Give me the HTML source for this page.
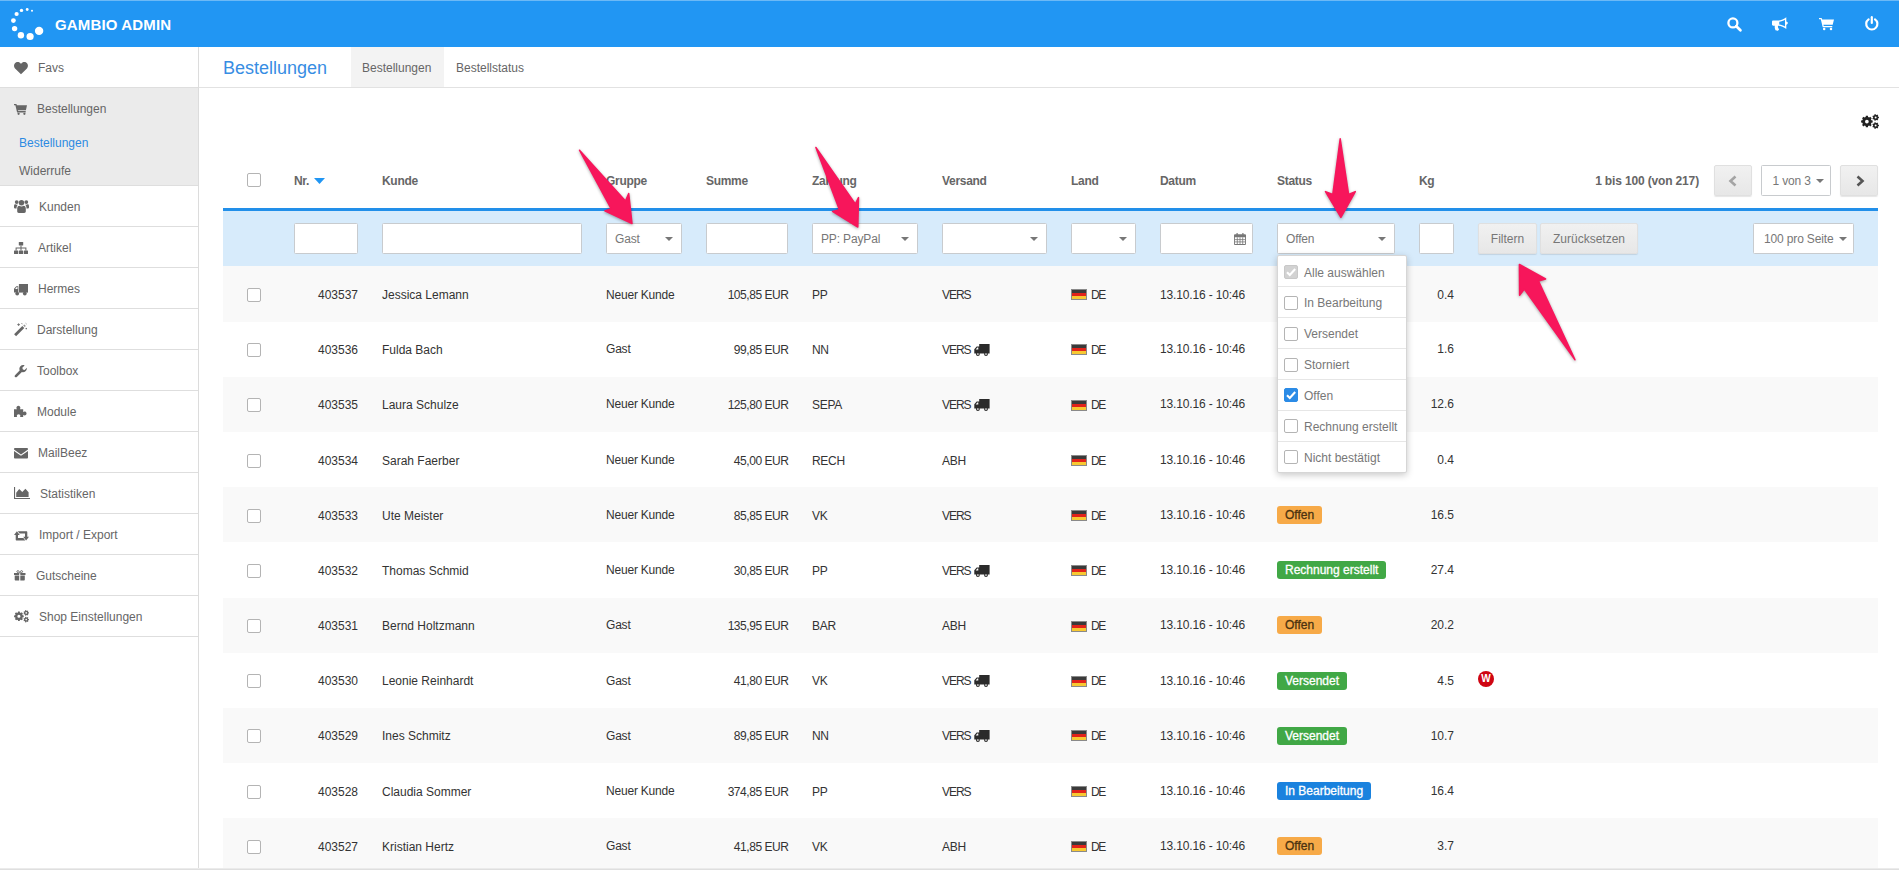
<!DOCTYPE html>
<html lang="de"><head><meta charset="utf-8"><title>Gambio Admin</title>
<style>
*{box-sizing:border-box;margin:0;padding:0}
html,body{width:1899px;height:870px;overflow:hidden;background:#fff}
body{font-family:"Liberation Sans",sans-serif;font-size:12px;color:#333;position:relative}
.abs{position:absolute}
.t{position:absolute;white-space:nowrap;line-height:16px;height:16px}
#hdr{position:absolute;left:0;top:0;width:1899px;height:47px;background:#2196f3;border-top:1px solid #6cb9f6}
#side{position:absolute;left:0;top:47px;width:199px;height:822px;background:#fff;border-right:1px solid #dcdcdc}
.mi{position:absolute;left:0;width:198px;height:41px;border-bottom:1px solid #dedede;color:#666}
.mi span{position:absolute;top:13px;line-height:16px;white-space:nowrap}
#grp{position:absolute;left:0;top:41px;width:198px;height:98px;background:#ebebeb;border-bottom:1px solid #dedede}
.hd{font-weight:bold;color:#666}
.inp{position:absolute;top:223px;height:31px;background:#fff;border:1px solid #c8cbce;border-radius:1.5px}
.sel{position:absolute;top:223px;height:31px;background:#fff;border:1px solid #c8cbce;border-radius:1.5px;color:#777}
.sel span{position:absolute;left:8px;top:7px;line-height:16px;white-space:nowrap;letter-spacing:-.15px}
.sel i{position:absolute;right:8px;top:13px;width:0;height:0;border-left:4px solid transparent;border-right:4px solid transparent;border-top:4px solid #777}
.btn{position:absolute;top:223px;height:31px;background:linear-gradient(#f1f1f1,#e7e7e7);border:1px solid #e0e0e0;border-radius:2px;color:#777;text-align:center;line-height:30px;box-shadow:0 1px 1px rgba(0,0,0,.10)}
.odd{background:#f9f9f9}
.cb{position:absolute;width:14px;height:14px;border:1px solid #b4b4b4;border-radius:2px;background:#fff}
.r{text-align:right}
.badge{position:absolute;height:18px;border-radius:3px;color:#fff;line-height:18px;padding:0 8px;white-space:nowrap}
.flag{position:absolute;width:16px;height:11px}
</style></head>
<body>
<div id="hdr"><svg class="abs" style="left:0;top:-1px" width="50" height="46" viewBox="0 0 50 46"><circle cx="32.0" cy="10.8" r="1.0" fill="#fff"/><circle cx="27.2" cy="9.5" r="1.4" fill="#fff"/><circle cx="21.5" cy="10.4" r="1.7" fill="#fff"/><circle cx="16.6" cy="14.0" r="2.1" fill="#fff"/><circle cx="13.4" cy="20.6" r="2.4" fill="#fff"/><circle cx="14.6" cy="28.6" r="2.7" fill="#fff"/><circle cx="20.9" cy="35.2" r="3.2" fill="#fff"/><circle cx="30.1" cy="36.5" r="3.6" fill="#fff"/><circle cx="39.1" cy="30.9" r="4.2" fill="#fff"/></svg><div class="t" style="left:55px;top:14.5px;font-size:15px;font-weight:bold;color:#fff;line-height:18px;height:18px;letter-spacing:.15px">GAMBIO ADMIN</div><svg class="abs" style="left:1727px;top:16px;overflow:visible" width="14.5" height="14" viewBox="0 0 14.5 14" fill="#fff" ><circle cx="5.9" cy="5.9" r="4.5" fill="none" stroke="#fff" stroke-width="2.3"/><path d="M9.3 9.3L13.4 13.2" stroke="#fff" stroke-width="2.8" stroke-linecap="round"/></svg><svg class="abs" style="left:1772px;top:16px;overflow:visible" width="16" height="14" viewBox="0 0 16 14" fill="#fff" ><g transform="scale(1.1 1.05)"><path d="M0 4.4C0 3.7.5 3.3 1.1 3.3H5.2C8.2 3.2 10.8 2 13 .2V4.3C13.8 4.4 14.4 5 14.4 5.8C14.4 6.6 13.8 7.2 13 7.3V11.4C10.8 9.6 8.4 8.5 5.6 8.3C5.1 9.2 5.4 10.5 6.3 11.4C6.4 12.4 5.6 13 4.6 13C3.7 13 3.2 12.7 2.9 11.9C2.5 10.8 2.3 9.5 2.6 8.3H1.1C.5 8.3 0 7.8 0 7.2ZM11.8 2.6C10.2 3.7 8.5 4.3 6.6 4.5V7.1C8.5 7.3 10.2 7.9 11.8 9Z" fill-rule="evenodd"/></g></svg><svg class="abs" style="left:1819px;top:17px;overflow:visible" width="15" height="12.2" viewBox="0 0 15 12.2" fill="#fff" ><path d="M0 .1H2.6L3.2 1.6H15L13.7 6.8H4.4L4.7 8.1H13.3V9.3H3.7L1.8 1.3H0Z"/><circle cx="5.2" cy="10.9" r="1.25"/><circle cx="12" cy="10.9" r="1.25"/></svg><svg class="abs" style="left:1865.4px;top:15px;overflow:visible" width="13.6" height="14" viewBox="0 0 13.6 14" fill="#fff" ><path d="M3.6 3.3A5.6 5.6 0 1 0 10 3.3" fill="none" stroke="#fff" stroke-width="2.2" stroke-linecap="round"/><path d="M6.8 1.2V7" stroke="#fff" stroke-width="2.2" stroke-linecap="round"/></svg></div>
<div id="side"><div class="mi" style="top:0"><span style="left:38px">Favs</span><svg class="abs" style="left:14px;top:15px;overflow:visible" width="14" height="12.2" viewBox="0 0 14 12.2" fill="#666" ><path d="M7 12.2L1.3 6.7C-.6 4.8-.3 1.7 1.9.5C3.7-.4 5.9.2 7 2C8.1.2 10.3-.4 12.1.5C14.3 1.7 14.6 4.8 12.7 6.7Z"/></svg></div><div id="grp"><svg class="abs" style="left:14px;top:16px;overflow:visible" width="13" height="11" viewBox="0 0 13 11" fill="#666" ><path d="M0 0H2.4L2.9 1.3H13L11.9 6.2H4L4.2 7.1H11.7V8.5H3.1L1.4 1.2H0Z"/><circle cx="4.6" cy="9.8" r="1.15"/><circle cx="10.4" cy="9.8" r="1.15"/></svg><span class="t" style="left:37px;top:13px;color:#666">Bestellungen</span><span class="t" style="left:19px;top:47px;color:#2b8ae2">Bestellungen</span><span class="t" style="left:19px;top:75px;color:#666">Widerrufe</span></div><div class="mi" style="top:139px"><span style="left:39px">Kunden</span><svg class="abs" style="left:14px;top:13.3px;overflow:visible" width="15" height="14" viewBox="0 0 15 14" fill="#666" color="#666"><circle cx="7.5" cy="3.7" r="2.7"/><path d="M3.2 12.3V9.6C3.2 7.5 4.4 6.8 5.4 6.8C6.6 7.7 8.4 7.7 9.6 6.8C10.6 6.8 11.8 7.5 11.8 9.6V12.3C11.8 13.3 11.2 14 10.2 14H4.8C3.8 14 3.2 13.3 3.2 12.3Z"/><circle cx="2.7" cy="3.1" r="1.9"/><circle cx="12.3" cy="3.1" r="1.9"/><path d="M0 8.6V7C0 5.7.7 5.3 1.4 5.3C2.2 5.9 3.2 5.9 4 5.4C3 6.4 2.5 7.6 2.5 9.4H.8C.3 9.4 0 9.1 0 8.6Z"/><path d="M15 8.6V7C15 5.7 14.3 5.3 13.6 5.3C12.8 5.9 11.8 5.9 11 5.4C12 6.4 12.5 7.6 12.5 9.4H14.2C14.7 9.4 15 9.1 15 8.6Z"/></svg></div><div class="mi" style="top:180px"><span style="left:38px">Artikel</span><svg class="abs" style="left:14px;top:14.7px;overflow:visible" width="14" height="12" viewBox="0 0 14 12" fill="#666" color="#666"><rect x="4.8" y="0" width="4.4" height="3.6" rx=".5"/><rect x="0" y="8.4" width="4.2" height="3.6" rx=".5"/><rect x="4.9" y="8.4" width="4.2" height="3.6" rx=".5"/><rect x="9.8" y="8.4" width="4.2" height="3.6" rx=".5"/><path d="M6.5 3.6H7.5V8.4H6.5ZM1.6 5.5H12.4V6.5H1.6ZM1.6 5.5H2.6V8.4H1.6ZM11.4 5.5H12.4V8.4H11.4Z"/></svg></div><div class="mi" style="top:221px"><span style="left:38px">Hermes</span><svg class="abs" style="left:14.3px;top:15.8px;overflow:visible" width="14" height="11.5" viewBox="0 0 14 11.5" fill="#666" color="#666"><path d="M4.9 0H14V8.6H4.9Z"/><path d="M4.3 2.2H2.3L0 4.7V8.6H4.3ZM3.5 3.1V5.1H1.1L2.8 3.1Z" fill-rule="evenodd"/><circle cx="3.2" cy="9.6" r="1.9"/><circle cx="10.8" cy="9.6" r="1.9"/></svg></div><div class="mi" style="top:262px"><span style="left:37px">Darstellung</span><svg class="abs" style="left:14px;top:14px;overflow:visible" width="13" height="13" viewBox="0 0 13 13" fill="#666" color="#666"><path d="M.1 11.2L8.3 3L10.3 5L2.1 13.2Z"/><path d="M9.2 2.6L10.4 1.4L11.9 2.9L10.7 4.1Z" opacity=".7"/><path d="M3.2 1.6H6M4.6.3V3M7.6.2L8.4 1.2M11.6 5.6H13M12.3 4.9V6.3M11.7.3L12.5 1" stroke="currentColor" stroke-width=".8" fill="none"/></svg></div><div class="mi" style="top:303px"><span style="left:37px">Toolbox</span><svg class="abs" style="left:14px;top:15px;overflow:visible" width="13" height="12.6" viewBox="0 0 13 12.6" fill="#666" color="#666"><path d="M1 10.2L6.6 4.6L8.4 6.4L2.8 12C2.3 12.5 1.5 12.5 1 12C.5 11.5.5 10.7 1 10.2Z"/><path d="M12.9 2.7L10.6 5L8.9 4.4L8.3 2.7L10.6.4C9.2-.2 7.5.1 6.4 1.2C5 2.6 5 4.9 6.4 6.3C7.8 7.7 10.1 7.7 11.5 6.3C12.5 5.3 12.9 3.9 12.9 2.7Z"/></svg></div><div class="mi" style="top:344px"><span style="left:37px">Module</span><svg class="abs" style="left:13.7px;top:13.8px;overflow:visible" width="13" height="12" viewBox="0 0 13 12" fill="#666" color="#666"><path d="M0 4.2H2.9C2.3 3.4 2.2 2.3 2.9 1.5C3.7.6 5.1.6 5.9 1.5C6.6 2.3 6.5 3.4 5.9 4.2H9.2V7C10 6.4 11.1 6.3 11.9 7C12.8 7.8 12.8 9.2 11.9 10C11.1 10.7 10 10.6 9.2 10V12H6C6.5 11.3 6.5 10.4 5.9 9.8C5.2 9.1 4 9.1 3.3 9.8C2.7 10.4 2.7 11.3 3.2 12H0Z"/></svg></div><div class="mi" style="top:385px"><span style="left:38px">MailBeez</span><svg class="abs" style="left:14px;top:16px;overflow:visible" width="14" height="10.5" viewBox="0 0 14 10.5" fill="#666" color="#666"><path d="M0 1.1C0 .5.5 0 1.1 0H12.9C13.5 0 14 .5 14 1.1V1.6L7 6.4L0 1.6ZM0 2.9L7 7.7L14 2.9V9.4C14 10 13.5 10.5 12.9 10.5H1.1C.5 10.5 0 10 0 9.4Z"/></svg></div><div class="mi" style="top:426px"><span style="left:40px">Statistiken</span><svg class="abs" style="left:14px;top:14.1px;overflow:visible" width="16" height="12" viewBox="0 0 16 12" fill="#666" color="#666"><path d="M0 0H1.1V10.9H16V12H0Z"/><path d="M2.2 9.9V5.8L5.2 2L8.3 5L11.4 1.8L14.6 5.2V9.9Z"/></svg></div><div class="mi" style="top:467px"><span style="left:39px">Import / Export</span><svg class="abs" style="left:14px;top:16.7px;overflow:visible" width="15" height="9.5" viewBox="0 0 15 9.5" fill="#666" color="#666"><path d="M0 3.9L2.9.2L5.8 3.9H4V7.1H9.4L11.3 9.4H2.7C2.1 9.4 1.7 9 1.7 8.4V3.9Z"/><path d="M15 5.7L12.1 9.4L9.2 5.7H11V2.5H5.6L3.7.2H12.3C12.9.2 13.3.6 13.3 1.2V5.7Z"/></svg></div><div class="mi" style="top:508px"><span style="left:36px">Gutscheine</span><svg class="abs" style="left:14.3px;top:15.3px;overflow:visible" width="11.5" height="10.5" viewBox="0 0 11.5 10.5" fill="#666" color="#666"><path d="M0 3H5.2V4.9H0ZM6.3 3H11.5V4.9H6.3ZM.7 5.4H5.2V10.5H1.4C1 10.5.7 10.2.7 9.8ZM6.3 5.4H10.8V9.8C10.8 10.2 10.5 10.5 10.1 10.5H6.3Z"/><path d="M5.6 2.9C4.2 2.9 2.9 2.6 2.9 1.6C2.9.3 4.8.2 5.7 2.4C6.6.2 8.6.3 8.6 1.6C8.6 2.6 7.2 2.9 5.9 2.9" fill="none" stroke="currentColor" stroke-width="1"/></svg></div><div class="mi" style="top:549px"><span style="left:39px">Shop Einstellungen</span><svg class="abs" style="left:14px;top:14px;overflow:visible" width="15" height="12.5" viewBox="0 0 15 12.5" fill="#666" color="#666"><path fill-rule="evenodd" d="M8.67 5.30 L9.72 5.42 L9.72 7.18 L8.67 7.30 L8.27 8.26 L8.93 9.09 L7.69 10.33 L6.86 9.67 L5.90 10.07 L5.78 11.12 L4.02 11.12 L3.90 10.07 L2.94 9.67 L2.11 10.33 L0.87 9.09 L1.53 8.26 L1.13 7.30 L0.08 7.18 L0.08 5.42 L1.13 5.30 L1.53 4.34 L0.87 3.51 L2.11 2.27 L2.94 2.93 L3.90 2.53 L4.02 1.48 L5.78 1.48 L5.90 2.53 L6.86 2.93 L7.69 2.27 L8.93 3.51 L8.27 4.34Z M6.45 6.30 A1.55 1.55 0 1 0 3.35 6.30 A1.55 1.55 0 1 0 6.45 6.30Z"/><path fill-rule="evenodd" d="M14.26 2.27 L14.94 2.33 L14.94 3.47 L14.26 3.53 L13.97 4.12 L14.36 4.68 L13.46 5.40 L12.99 4.90 L12.35 5.04 L12.15 5.70 L11.03 5.44 L11.13 4.77 L10.62 4.36 L9.98 4.61 L9.48 3.57 L10.07 3.23 L10.07 2.57 L9.48 2.23 L9.98 1.19 L10.62 1.44 L11.13 1.03 L11.03 0.36 L12.15 0.10 L12.35 0.76 L12.99 0.90 L13.46 0.40 L14.36 1.12 L13.97 1.68Z M13.00 2.90 A0.8 0.8 0 1 0 11.40 2.90 A0.8 0.8 0 1 0 13.00 2.90Z"/><path fill-rule="evenodd" d="M14.26 8.97 L14.94 9.03 L14.94 10.17 L14.26 10.23 L13.97 10.82 L14.36 11.38 L13.46 12.10 L12.99 11.60 L12.35 11.74 L12.15 12.40 L11.03 12.14 L11.13 11.47 L10.62 11.06 L9.98 11.31 L9.48 10.27 L10.07 9.93 L10.07 9.27 L9.48 8.93 L9.98 7.89 L10.62 8.14 L11.13 7.73 L11.03 7.06 L12.15 6.80 L12.35 7.46 L12.99 7.60 L13.46 7.10 L14.36 7.82 L13.97 8.38Z M13.00 9.60 A0.8 0.8 0 1 0 11.40 9.60 A0.8 0.8 0 1 0 13.00 9.60Z"/></svg></div></div>
<div class="abs" style="left:199px;top:47px;width:1700px;height:41px;border-bottom:1px solid #e2e2e2"></div><div class="abs" style="left:351px;top:47px;width:93px;height:40px;background:#f3f3f3"></div><div class="t" style="left:223px;top:56px;font-size:18px;line-height:24px;height:24px;color:#378de3">Bestellungen</div><div class="t" style="left:362px;top:60px;color:#666">Bestellungen</div><div class="t" style="left:456px;top:60px;color:#666">Bestellstatus</div><svg class="abs" style="left:1860.6px;top:113.6px;overflow:visible" width="17.5" height="16" viewBox="0 0 17.5 16" fill="#222" ><path fill-rule="evenodd" d="M10.40 6.36 L11.66 6.50 L11.66 8.62 L10.40 8.76 L9.93 9.91 L10.72 10.90 L9.22 12.40 L8.23 11.61 L7.08 12.08 L6.94 13.34 L4.82 13.34 L4.68 12.08 L3.53 11.61 L2.54 12.40 L1.04 10.90 L1.83 9.91 L1.36 8.76 L0.10 8.62 L0.10 6.50 L1.36 6.36 L1.83 5.21 L1.04 4.22 L2.54 2.72 L3.53 3.51 L4.68 3.04 L4.82 1.78 L6.94 1.78 L7.08 3.04 L8.23 3.51 L9.22 2.72 L10.72 4.22 L9.93 5.21Z M7.74 7.56 A1.8599999999999999 1.8599999999999999 0 1 0 4.02 7.56 A1.8599999999999999 1.8599999999999999 0 1 0 7.74 7.56Z"/><path fill-rule="evenodd" d="M17.11 2.73 L17.93 2.79 L17.93 4.17 L17.11 4.23 L16.77 4.94 L17.23 5.62 L16.15 6.48 L15.59 5.88 L14.83 6.05 L14.58 6.84 L13.24 6.53 L13.36 5.72 L12.74 5.23 L11.98 5.53 L11.38 4.29 L12.09 3.87 L12.09 3.09 L11.38 2.67 L11.98 1.43 L12.74 1.73 L13.36 1.24 L13.24 0.43 L14.58 0.12 L14.83 0.91 L15.59 1.08 L16.15 0.48 L17.23 1.34 L16.77 2.02Z M15.60 3.48 A0.96 0.96 0 1 0 13.68 3.48 A0.96 0.96 0 1 0 15.60 3.48Z"/><path fill-rule="evenodd" d="M17.11 10.77 L17.93 10.83 L17.93 12.21 L17.11 12.27 L16.77 12.98 L17.23 13.66 L16.15 14.52 L15.59 13.92 L14.83 14.09 L14.58 14.88 L13.24 14.57 L13.36 13.76 L12.74 13.27 L11.98 13.57 L11.38 12.33 L12.09 11.91 L12.09 11.13 L11.38 10.71 L11.98 9.47 L12.74 9.77 L13.36 9.28 L13.24 8.47 L14.58 8.16 L14.83 8.95 L15.59 9.12 L16.15 8.52 L17.23 9.38 L16.77 10.06Z M15.60 11.52 A0.96 0.96 0 1 0 13.68 11.52 A0.96 0.96 0 1 0 15.60 11.52Z"/></svg>
<div class="cb" style="left:247px;top:173px"></div>
<div class="t hd" style="left:294px;top:173px;letter-spacing:-.3px">Nr.</div>
<div class="t hd" style="left:382px;top:173px;letter-spacing:-.3px">Kunde</div>
<div class="t hd" style="left:606px;top:173px;letter-spacing:-.3px">Gruppe</div>
<div class="t hd" style="left:706px;top:173px;letter-spacing:-.3px">Summe</div>
<div class="t hd" style="left:812px;top:173px;letter-spacing:-.3px">Zahlung</div>
<div class="t hd" style="left:942px;top:173px;letter-spacing:-.3px">Versand</div>
<div class="t hd" style="left:1071px;top:173px;letter-spacing:-.3px">Land</div>
<div class="t hd" style="left:1160px;top:173px;letter-spacing:-.3px">Datum</div>
<div class="t hd" style="left:1277px;top:173px;letter-spacing:-.3px">Status</div>
<div class="t hd" style="left:1419px;top:173px;letter-spacing:-.3px">Kg</div>
<svg class="abs" style="left:314px;top:178px" width="11" height="6" viewBox="0 0 11 6"><path d="M0 0H11L5.5 6Z" fill="#2196f3"/></svg>
<div class="t hd" style="left:1496px;width:203px;top:173px;text-align:right;letter-spacing:-.15px">1 bis 100 (von 217)</div>
<div class="btn" style="left:1714px;top:165px;width:38px;height:31px"><svg class="abs" style="left:13px;top:9px" width="9" height="12" viewBox="0 0 9 12"><path d="M7.5 1.5L2.5 6L7.5 10.5" fill="none" stroke="#a4a4a4" stroke-width="2.6"/></svg></div>
<div class="sel" style="left:1761px;top:165px;width:70px;height:31px"><span style="left:10.5px">1 von 3</span><i style="right:6px;top:13px"></i></div>
<div class="btn" style="left:1840px;top:165px;width:38px;height:31px"><svg class="abs" style="left:15px;top:9px" width="9" height="12" viewBox="0 0 9 12"><path d="M1.5 1.5L6.5 6L1.5 10.5" fill="none" stroke="#555" stroke-width="2.6"/></svg></div>
<div class="abs" style="left:223px;top:208px;width:1655px;height:3px;background:#228fe9"></div>
<div class="abs" style="left:223px;top:211px;width:1655px;height:55px;background:#d7ebfb"></div>
<div class="inp" style="left:294px;width:64px"></div>
<div class="inp" style="left:382px;width:200px"></div>
<div class="sel" style="left:606px;width:76px"><span>Gast</span><i></i></div>
<div class="inp" style="left:706px;width:82px"></div>
<div class="sel" style="left:812px;width:106px"><span>PP: PayPal</span><i></i></div>
<div class="sel" style="left:942px;width:105px"><i></i></div>
<div class="sel" style="left:1071px;width:65px"><i></i></div>
<div class="inp" style="left:1160px;width:93px"><svg class="abs" style="left:73px;top:9px;overflow:visible" width="12" height="12" viewBox="0 0 12 12" fill="#777" color="#777"><path fill-rule="evenodd" d="M0 2.2C0 1.7.4 1.3.9 1.3H11.1C11.6 1.3 12 1.7 12 2.2V11.1C12 11.6 11.6 12 11.1 12H.9C.4 12 0 11.6 0 11.1ZM.9 4.3V11.1H11.1V4.3Z"/><path d="M2.5 0H3.7V2.6H2.5ZM8.3 0H9.5V2.6H8.3Z"/><path d="M3.3 4.3V11.1M6 4.3V11.1M8.7 4.3V11.1M.9 6.6H11.1M.9 8.9H11.1" stroke="currentColor" stroke-width=".8" fill="none"/></svg></div>
<div class="sel" style="left:1277px;width:118px"><span>Offen</span><i></i></div>
<div class="inp" style="left:1419px;width:35px"></div>
<div class="btn" style="left:1478px;width:59px">Filtern</div>
<div class="btn" style="left:1540px;width:98px">Zurücksetzen</div>
<div class="sel" style="left:1753px;width:101px"><span style="left:10px">100 pro Seite</span><i style="right:6px"></i></div>
<div class="abs odd" style="left:223px;top:266px;width:1655px;height:56px"></div>
<div class="cb" style="left:247px;top:288px"></div>
<div class="t r" style="left:258px;width:100px;top:287px">403537</div>
<div class="t" style="left:382px;top:287px">Jessica Lemann</div>
<div class="t" style="left:606px;top:287px;letter-spacing:-.2px">Neuer Kunde</div>
<div class="t r" style="left:688.5px;width:100px;top:287px;letter-spacing:-.45px">105,85 EUR</div>
<div class="t" style="left:812px;top:287px;letter-spacing:-.3px">PP</div>
<div class="t" style="left:942px;top:287px;letter-spacing:-1.05px">VERS</div>
<svg class="flag" style="left:1071px;top:289px" viewBox="0 0 16 11"><rect width="16" height="11" fill="#8a8a8a"/><rect x="1" y="1" width="14" height="3" fill="#3a3a3a"/><rect x="1" y="4" width="14" height="3" fill="#e2231a"/><rect x="1" y="7" width="14" height="3" fill="#f7c832"/></svg>
<div class="t" style="left:1091px;top:287px;letter-spacing:-1.3px">DE</div>
<div class="t" style="left:1160px;top:287px;letter-spacing:-.15px">13.10.16 - 10:46</div>
<div class="t r" style="left:1354px;width:100px;top:287px">0.4</div>
<div class="cb" style="left:247px;top:343px"></div>
<div class="t r" style="left:258px;width:100px;top:342px">403536</div>
<div class="t" style="left:382px;top:342px">Fulda Bach</div>
<div class="t" style="left:606px;top:341px;letter-spacing:-.2px">Gast</div>
<div class="t r" style="left:688.5px;width:100px;top:342px;letter-spacing:-.45px">99,85 EUR</div>
<div class="t" style="left:812px;top:342px;letter-spacing:-.3px">NN</div>
<div class="t" style="left:942px;top:342px;letter-spacing:-1.05px">VERS</div>
<svg class="abs" style="left:974.4px;top:344px;overflow:visible" width="15.6" height="12" viewBox="0 0 15.6 12" fill="#2b2b2b" ><path fill-rule="evenodd" d="M5.2 0H15.6V9.5H.3V5.2L2.7 2.4H5.2ZM4.3 3.5V5.5H1.7L3.3 3.5Z"/><circle cx="3.9" cy="10" r="1.95"/><circle cx="12" cy="10" r="1.95"/><circle cx="3.9" cy="10" r=".85" fill="#fff"/><circle cx="12" cy="10" r=".85" fill="#fff"/></svg>
<svg class="flag" style="left:1071px;top:344px" viewBox="0 0 16 11"><rect width="16" height="11" fill="#8a8a8a"/><rect x="1" y="1" width="14" height="3" fill="#3a3a3a"/><rect x="1" y="4" width="14" height="3" fill="#e2231a"/><rect x="1" y="7" width="14" height="3" fill="#f7c832"/></svg>
<div class="t" style="left:1091px;top:342px;letter-spacing:-1.3px">DE</div>
<div class="t" style="left:1160px;top:341px;letter-spacing:-.15px">13.10.16 - 10:46</div>
<div class="t r" style="left:1354px;width:100px;top:341px">1.6</div>
<div class="abs odd" style="left:223px;top:377px;width:1655px;height:55px"></div>
<div class="cb" style="left:247px;top:398px"></div>
<div class="t r" style="left:258px;width:100px;top:397px">403535</div>
<div class="t" style="left:382px;top:397px">Laura Schulze</div>
<div class="t" style="left:606px;top:396px;letter-spacing:-.2px">Neuer Kunde</div>
<div class="t r" style="left:688.5px;width:100px;top:397px;letter-spacing:-.45px">125,80 EUR</div>
<div class="t" style="left:812px;top:397px;letter-spacing:-.3px">SEPA</div>
<div class="t" style="left:942px;top:397px;letter-spacing:-1.05px">VERS</div>
<svg class="abs" style="left:974.4px;top:399px;overflow:visible" width="15.6" height="12" viewBox="0 0 15.6 12" fill="#2b2b2b" ><path fill-rule="evenodd" d="M5.2 0H15.6V9.5H.3V5.2L2.7 2.4H5.2ZM4.3 3.5V5.5H1.7L3.3 3.5Z"/><circle cx="3.9" cy="10" r="1.95"/><circle cx="12" cy="10" r="1.95"/><circle cx="3.9" cy="10" r=".85" fill="#fff"/><circle cx="12" cy="10" r=".85" fill="#fff"/></svg>
<svg class="flag" style="left:1071px;top:400px" viewBox="0 0 16 11"><rect width="16" height="11" fill="#8a8a8a"/><rect x="1" y="1" width="14" height="3" fill="#3a3a3a"/><rect x="1" y="4" width="14" height="3" fill="#e2231a"/><rect x="1" y="7" width="14" height="3" fill="#f7c832"/></svg>
<div class="t" style="left:1091px;top:397px;letter-spacing:-1.3px">DE</div>
<div class="t" style="left:1160px;top:396px;letter-spacing:-.15px">13.10.16 - 10:46</div>
<div class="t r" style="left:1354px;width:100px;top:396px">12.6</div>
<div class="cb" style="left:247px;top:454px"></div>
<div class="t r" style="left:258px;width:100px;top:453px">403534</div>
<div class="t" style="left:382px;top:453px">Sarah Faerber</div>
<div class="t" style="left:606px;top:452px;letter-spacing:-.2px">Neuer Kunde</div>
<div class="t r" style="left:688.5px;width:100px;top:453px;letter-spacing:-.45px">45,00 EUR</div>
<div class="t" style="left:812px;top:453px;letter-spacing:-.3px">RECH</div>
<div class="t" style="left:942px;top:453px;letter-spacing:-0.25px">ABH</div>
<svg class="flag" style="left:1071px;top:455px" viewBox="0 0 16 11"><rect width="16" height="11" fill="#8a8a8a"/><rect x="1" y="1" width="14" height="3" fill="#3a3a3a"/><rect x="1" y="4" width="14" height="3" fill="#e2231a"/><rect x="1" y="7" width="14" height="3" fill="#f7c832"/></svg>
<div class="t" style="left:1091px;top:453px;letter-spacing:-1.3px">DE</div>
<div class="t" style="left:1160px;top:452px;letter-spacing:-.15px">13.10.16 - 10:46</div>
<div class="t r" style="left:1354px;width:100px;top:452px">0.4</div>
<div class="abs odd" style="left:223px;top:487px;width:1655px;height:55px"></div>
<div class="cb" style="left:247px;top:509px"></div>
<div class="t r" style="left:258px;width:100px;top:508px">403533</div>
<div class="t" style="left:382px;top:508px">Ute Meister</div>
<div class="t" style="left:606px;top:507px;letter-spacing:-.2px">Neuer Kunde</div>
<div class="t r" style="left:688.5px;width:100px;top:508px;letter-spacing:-.45px">85,85 EUR</div>
<div class="t" style="left:812px;top:508px;letter-spacing:-.3px">VK</div>
<div class="t" style="left:942px;top:508px;letter-spacing:-1.05px">VERS</div>
<svg class="flag" style="left:1071px;top:510px" viewBox="0 0 16 11"><rect width="16" height="11" fill="#8a8a8a"/><rect x="1" y="1" width="14" height="3" fill="#3a3a3a"/><rect x="1" y="4" width="14" height="3" fill="#e2231a"/><rect x="1" y="7" width="14" height="3" fill="#f7c832"/></svg>
<div class="t" style="left:1091px;top:508px;letter-spacing:-1.3px">DE</div>
<div class="t" style="left:1160px;top:507px;letter-spacing:-.15px">13.10.16 - 10:46</div>
<div class="badge" style="left:1277px;top:506px;background:#f7aa48;color:#4a3210;-webkit-text-stroke:.3px #4a3210">Offen</div>
<div class="t r" style="left:1354px;width:100px;top:507px">16.5</div>
<div class="cb" style="left:247px;top:564px"></div>
<div class="t r" style="left:258px;width:100px;top:563px">403532</div>
<div class="t" style="left:382px;top:563px">Thomas Schmid</div>
<div class="t" style="left:606px;top:562px;letter-spacing:-.2px">Neuer Kunde</div>
<div class="t r" style="left:688.5px;width:100px;top:563px;letter-spacing:-.45px">30,85 EUR</div>
<div class="t" style="left:812px;top:563px;letter-spacing:-.3px">PP</div>
<div class="t" style="left:942px;top:563px;letter-spacing:-1.05px">VERS</div>
<svg class="abs" style="left:974.4px;top:565px;overflow:visible" width="15.6" height="12" viewBox="0 0 15.6 12" fill="#2b2b2b" ><path fill-rule="evenodd" d="M5.2 0H15.6V9.5H.3V5.2L2.7 2.4H5.2ZM4.3 3.5V5.5H1.7L3.3 3.5Z"/><circle cx="3.9" cy="10" r="1.95"/><circle cx="12" cy="10" r="1.95"/><circle cx="3.9" cy="10" r=".85" fill="#fff"/><circle cx="12" cy="10" r=".85" fill="#fff"/></svg>
<svg class="flag" style="left:1071px;top:565px" viewBox="0 0 16 11"><rect width="16" height="11" fill="#8a8a8a"/><rect x="1" y="1" width="14" height="3" fill="#3a3a3a"/><rect x="1" y="4" width="14" height="3" fill="#e2231a"/><rect x="1" y="7" width="14" height="3" fill="#f7c832"/></svg>
<div class="t" style="left:1091px;top:563px;letter-spacing:-1.3px">DE</div>
<div class="t" style="left:1160px;top:562px;letter-spacing:-.15px">13.10.16 - 10:46</div>
<div class="badge" style="left:1277px;top:561px;background:#41a846;color:#fff;-webkit-text-stroke:.3px #fff">Rechnung erstellt</div>
<div class="t r" style="left:1354px;width:100px;top:562px">27.4</div>
<div class="abs odd" style="left:223px;top:598px;width:1655px;height:55px"></div>
<div class="cb" style="left:247px;top:619px"></div>
<div class="t r" style="left:258px;width:100px;top:618px">403531</div>
<div class="t" style="left:382px;top:618px">Bernd Holtzmann</div>
<div class="t" style="left:606px;top:617px;letter-spacing:-.2px">Gast</div>
<div class="t r" style="left:688.5px;width:100px;top:618px;letter-spacing:-.45px">135,95 EUR</div>
<div class="t" style="left:812px;top:618px;letter-spacing:-.3px">BAR</div>
<div class="t" style="left:942px;top:618px;letter-spacing:-0.25px">ABH</div>
<svg class="flag" style="left:1071px;top:621px" viewBox="0 0 16 11"><rect width="16" height="11" fill="#8a8a8a"/><rect x="1" y="1" width="14" height="3" fill="#3a3a3a"/><rect x="1" y="4" width="14" height="3" fill="#e2231a"/><rect x="1" y="7" width="14" height="3" fill="#f7c832"/></svg>
<div class="t" style="left:1091px;top:618px;letter-spacing:-1.3px">DE</div>
<div class="t" style="left:1160px;top:617px;letter-spacing:-.15px">13.10.16 - 10:46</div>
<div class="badge" style="left:1277px;top:616px;background:#f7aa48;color:#4a3210;-webkit-text-stroke:.3px #4a3210">Offen</div>
<div class="t r" style="left:1354px;width:100px;top:617px">20.2</div>
<div class="cb" style="left:247px;top:674px"></div>
<div class="t r" style="left:258px;width:100px;top:673px">403530</div>
<div class="t" style="left:382px;top:673px">Leonie Reinhardt</div>
<div class="t" style="left:606px;top:673px;letter-spacing:-.2px">Gast</div>
<div class="t r" style="left:688.5px;width:100px;top:673px;letter-spacing:-.45px">41,80 EUR</div>
<div class="t" style="left:812px;top:673px;letter-spacing:-.3px">VK</div>
<div class="t" style="left:942px;top:673px;letter-spacing:-1.05px">VERS</div>
<svg class="abs" style="left:974.4px;top:675px;overflow:visible" width="15.6" height="12" viewBox="0 0 15.6 12" fill="#2b2b2b" ><path fill-rule="evenodd" d="M5.2 0H15.6V9.5H.3V5.2L2.7 2.4H5.2ZM4.3 3.5V5.5H1.7L3.3 3.5Z"/><circle cx="3.9" cy="10" r="1.95"/><circle cx="12" cy="10" r="1.95"/><circle cx="3.9" cy="10" r=".85" fill="#fff"/><circle cx="12" cy="10" r=".85" fill="#fff"/></svg>
<svg class="flag" style="left:1071px;top:676px" viewBox="0 0 16 11"><rect width="16" height="11" fill="#8a8a8a"/><rect x="1" y="1" width="14" height="3" fill="#3a3a3a"/><rect x="1" y="4" width="14" height="3" fill="#e2231a"/><rect x="1" y="7" width="14" height="3" fill="#f7c832"/></svg>
<div class="t" style="left:1091px;top:673px;letter-spacing:-1.3px">DE</div>
<div class="t" style="left:1160px;top:673px;letter-spacing:-.15px">13.10.16 - 10:46</div>
<div class="badge" style="left:1277px;top:672px;background:#41a846;color:#fff;-webkit-text-stroke:.3px #fff">Versendet</div>
<div class="t r" style="left:1354px;width:100px;top:673px">4.5</div>
<div class="abs" style="left:1478px;top:671px;width:16px;height:16px;border-radius:8px;background:#cf0512;color:#fff;font-size:10px;font-weight:bold;line-height:16px;text-align:center">W</div>
<div class="abs odd" style="left:223px;top:708px;width:1655px;height:55px"></div>
<div class="cb" style="left:247px;top:729px"></div>
<div class="t r" style="left:258px;width:100px;top:728px">403529</div>
<div class="t" style="left:382px;top:728px">Ines Schmitz</div>
<div class="t" style="left:606px;top:728px;letter-spacing:-.2px">Gast</div>
<div class="t r" style="left:688.5px;width:100px;top:728px;letter-spacing:-.45px">89,85 EUR</div>
<div class="t" style="left:812px;top:728px;letter-spacing:-.3px">NN</div>
<div class="t" style="left:942px;top:728px;letter-spacing:-1.05px">VERS</div>
<svg class="abs" style="left:974.4px;top:730px;overflow:visible" width="15.6" height="12" viewBox="0 0 15.6 12" fill="#2b2b2b" ><path fill-rule="evenodd" d="M5.2 0H15.6V9.5H.3V5.2L2.7 2.4H5.2ZM4.3 3.5V5.5H1.7L3.3 3.5Z"/><circle cx="3.9" cy="10" r="1.95"/><circle cx="12" cy="10" r="1.95"/><circle cx="3.9" cy="10" r=".85" fill="#fff"/><circle cx="12" cy="10" r=".85" fill="#fff"/></svg>
<svg class="flag" style="left:1071px;top:730px" viewBox="0 0 16 11"><rect width="16" height="11" fill="#8a8a8a"/><rect x="1" y="1" width="14" height="3" fill="#3a3a3a"/><rect x="1" y="4" width="14" height="3" fill="#e2231a"/><rect x="1" y="7" width="14" height="3" fill="#f7c832"/></svg>
<div class="t" style="left:1091px;top:728px;letter-spacing:-1.3px">DE</div>
<div class="t" style="left:1160px;top:728px;letter-spacing:-.15px">13.10.16 - 10:46</div>
<div class="badge" style="left:1277px;top:727px;background:#41a846;color:#fff;-webkit-text-stroke:.3px #fff">Versendet</div>
<div class="t r" style="left:1354px;width:100px;top:728px">10.7</div>
<div class="cb" style="left:247px;top:785px"></div>
<div class="t r" style="left:258px;width:100px;top:784px">403528</div>
<div class="t" style="left:382px;top:784px">Claudia Sommer</div>
<div class="t" style="left:606px;top:783px;letter-spacing:-.2px">Neuer Kunde</div>
<div class="t r" style="left:688.5px;width:100px;top:784px;letter-spacing:-.45px">374,85 EUR</div>
<div class="t" style="left:812px;top:784px;letter-spacing:-.3px">PP</div>
<div class="t" style="left:942px;top:784px;letter-spacing:-1.05px">VERS</div>
<svg class="flag" style="left:1071px;top:786px" viewBox="0 0 16 11"><rect width="16" height="11" fill="#8a8a8a"/><rect x="1" y="1" width="14" height="3" fill="#3a3a3a"/><rect x="1" y="4" width="14" height="3" fill="#e2231a"/><rect x="1" y="7" width="14" height="3" fill="#f7c832"/></svg>
<div class="t" style="left:1091px;top:784px;letter-spacing:-1.3px">DE</div>
<div class="t" style="left:1160px;top:783px;letter-spacing:-.15px">13.10.16 - 10:46</div>
<div class="badge" style="left:1277px;top:782px;background:#1a82de;color:#fff;-webkit-text-stroke:.3px #fff">In Bearbeitung</div>
<div class="t r" style="left:1354px;width:100px;top:783px">16.4</div>
<div class="abs odd" style="left:223px;top:818px;width:1655px;height:56px"></div>
<div class="cb" style="left:247px;top:840px"></div>
<div class="t r" style="left:258px;width:100px;top:839px">403527</div>
<div class="t" style="left:382px;top:839px">Kristian Hertz</div>
<div class="t" style="left:606px;top:838px;letter-spacing:-.2px">Gast</div>
<div class="t r" style="left:688.5px;width:100px;top:839px;letter-spacing:-.45px">41,85 EUR</div>
<div class="t" style="left:812px;top:839px;letter-spacing:-.3px">VK</div>
<div class="t" style="left:942px;top:839px;letter-spacing:-0.25px">ABH</div>
<svg class="flag" style="left:1071px;top:841px" viewBox="0 0 16 11"><rect width="16" height="11" fill="#8a8a8a"/><rect x="1" y="1" width="14" height="3" fill="#3a3a3a"/><rect x="1" y="4" width="14" height="3" fill="#e2231a"/><rect x="1" y="7" width="14" height="3" fill="#f7c832"/></svg>
<div class="t" style="left:1091px;top:839px;letter-spacing:-1.3px">DE</div>
<div class="t" style="left:1160px;top:838px;letter-spacing:-.15px">13.10.16 - 10:46</div>
<div class="badge" style="left:1277px;top:837px;background:#f7aa48;color:#4a3210;-webkit-text-stroke:.3px #4a3210">Offen</div>
<div class="t r" style="left:1354px;width:100px;top:838px">3.7</div>
<div class="abs" style="left:1277px;top:255px;width:130px;height:218px;background:#fff;border:1px solid #d6d6d6;border-radius:2px;box-shadow:0 2px 7px rgba(0,0,0,.22)"></div>
<div class="cb" style="left:1284px;top:265px;background:#d2d2d2;border-color:#c8c8c8"><svg class="abs" style="left:0;top:0" width="12" height="12" viewBox="0 0 12 12"><path d="M2 6.2L4.8 8.9L10.2 3" fill="none" stroke="#fff" stroke-width="2.1"/></svg></div>
<div class="t" style="left:1304px;top:265px;color:#777">Alle auswählen</div>
<div class="abs" style="left:1278px;top:286px;width:128px;height:1px;background:#e6e6e6"></div>
<div class="cb" style="left:1284px;top:296px"></div>
<div class="t" style="left:1304px;top:295px;color:#777">In Bearbeitung</div>
<div class="abs" style="left:1278px;top:317px;width:128px;height:1px;background:#e6e6e6"></div>
<div class="cb" style="left:1284px;top:327px"></div>
<div class="t" style="left:1304px;top:326px;color:#777">Versendet</div>
<div class="abs" style="left:1278px;top:348px;width:128px;height:1px;background:#e6e6e6"></div>
<div class="cb" style="left:1284px;top:358px"></div>
<div class="t" style="left:1304px;top:357px;color:#777">Storniert</div>
<div class="abs" style="left:1278px;top:379px;width:128px;height:1px;background:#e6e6e6"></div>
<div class="cb" style="left:1284px;top:388px;background:#2b8be6;border-color:#2b8be6"><svg class="abs" style="left:0;top:0" width="12" height="12" viewBox="0 0 12 12"><path d="M2 6.2L4.8 8.9L10.2 3" fill="none" stroke="#fff" stroke-width="2.1"/></svg></div>
<div class="t" style="left:1304px;top:388px;color:#777">Offen</div>
<div class="abs" style="left:1278px;top:410px;width:128px;height:1px;background:#e6e6e6"></div>
<div class="cb" style="left:1284px;top:419px"></div>
<div class="t" style="left:1304px;top:419px;color:#777">Rechnung erstellt</div>
<div class="abs" style="left:1278px;top:441px;width:128px;height:1px;background:#e6e6e6"></div>
<div class="cb" style="left:1284px;top:450px"></div>
<div class="t" style="left:1304px;top:450px;color:#777">Nicht bestätigt</div>
<svg class="abs" style="left:0;top:0;filter:drop-shadow(0 1px 1.5px rgba(0,0,0,.35))" width="1899" height="870" viewBox="0 0 1899 870"><g fill="#f7165b" stroke="#f7165b" stroke-width="1.5" stroke-linejoin="round">
<path d="M579.5 150.2 L625.5 201.1 L628.7 193.5 L632.0 223.6 L604.8 210.9 L611.1 208.6Z"/>
<path d="M815.9 147.5 L855.3 204.0 L858.5 197.6 L857.8 227.0 L832.5 211.4 L839.4 209.7Z"/>
<path d="M1340.2 138.8 L1348.6 194.4 L1355.3 191.6 L1340.9 217.4 L1325.5 191.6 L1332.8 194.4Z"/>
<path d="M1519.4 264.4 L1545.6 279.0 L1538.4 280.9 L1575.0 359.8 L1524.3 289.1 L1519.6 295.2Z"/>
</g></svg>
<div class="abs" style="left:0;top:868px;width:1899px;height:2px;background:linear-gradient(#f1f1f1,#d9d9d9)"></div>
</body></html>
